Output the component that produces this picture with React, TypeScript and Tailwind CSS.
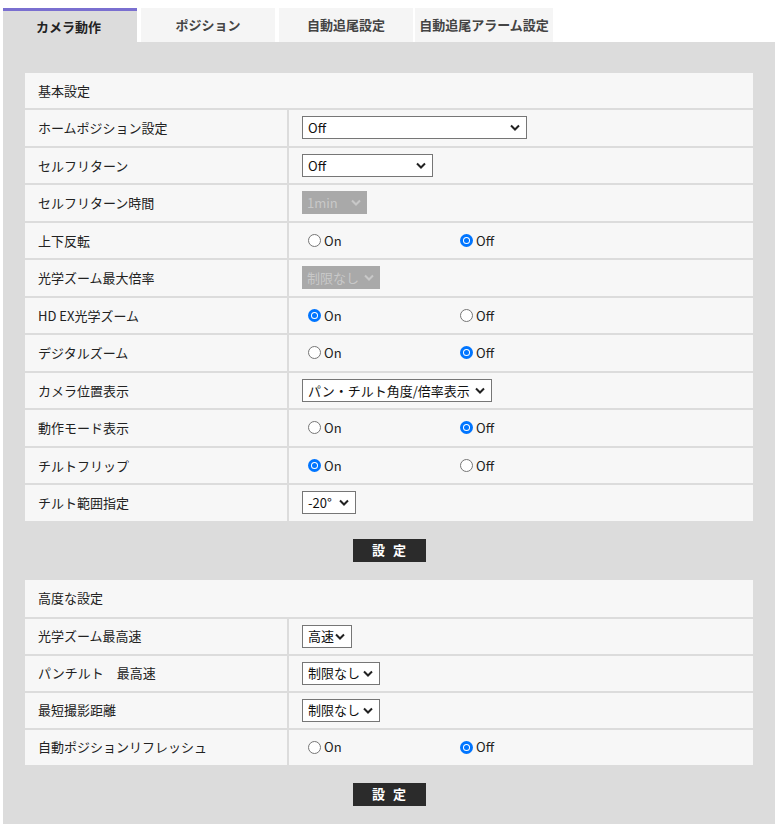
import React from "react";

const Chev = ({ c = "#222" }: { c?: string }) => (
  <svg width="10" height="7" viewBox="0 0 10 7"><path d="M1 1.5 L5 5.5 L9 1.5" stroke={c} strokeWidth="2" fill="none" /></svg>
);

const Sel = ({ text, w, disabled }: { text: string; w: number; disabled?: boolean }) => (
  <div
    style={{ width: w }}
    className={`h-[23px] flex items-center justify-between pl-[5px] pr-[6px] text-[13px] ${disabled ? "bg-[#a9a9a9] text-[#c8c8c8]" : "bg-white border border-[#767676] text-[#111]"}`}
  >
    <span>{text}</span>
    <Chev c={disabled ? "#c8c8c8" : "#222"} />
  </div>
);

const Radio = ({ on, label }: { on: boolean; label: string }) => (
  <span className="flex items-center gap-[3px] text-[13px]">
    {on ? (
      <span className="w-[13px] h-[13px] rounded-full bg-[#0075ff] flex items-center justify-center"><span className="w-[7px] h-[7px] rounded-full bg-white flex items-center justify-center"><span className="w-[5px] h-[5px] rounded-full bg-[#0075ff]" /></span></span>
    ) : (
      <span className="w-[13px] h-[13px] rounded-full border border-[#767676] bg-white" />
    )}
    <span>{label}</span>
  </span>
);

const OnOff = ({ on }: { on: boolean }) => (
  <div className="flex items-center">
    <div className="w-[158px] pl-[6px]"><Radio on={on} label="On" /></div>
    <Radio on={!on} label="Off" />
  </div>
);

const Row = ({ label, children, h = "h-[37.5px]" }: { label: string; children: React.ReactNode; h?: string }) => (
  <div className={`flex ${h} border-t-[2px] border-[#dcdcdc]`}>
    <div className="w-[264px] pl-[13px] flex items-center border-r-[2px] border-[#dcdcdc]">{label}</div>
    <div className="flex-1 pl-[13px] flex items-center">{children}</div>
  </div>
);

const Btn = () => (
  <div className="flex justify-center py-[18px]">
    <div className="w-[73px] h-[23px] bg-[#2b2b2b] text-white text-[13px] font-bold flex items-center justify-center tracking-[0.6em] pl-[0.6em]">設定</div>
  </div>
);

export default function App() {
  return (
    <div className="w-[779px] h-[824px] bg-white text-[13px] text-[#222]" style={{ fontFamily: '"Noto Sans CJK JP", "Noto Sans", sans-serif' }}>
      <div className="pt-[8px] pl-[3px] flex text-[13px] font-bold">
        <div className="w-[134px] h-[34px] bg-[#dcdcdc] border-t-[3px] border-[#7a6fd0] flex items-center pl-[33px]">カメラ動作</div>
        <div className="w-[134px] h-[34px] bg-[#f5f5f5] ml-[4px] flex items-center justify-center text-[#444]">ポジション</div>
        <div className="w-[134px] h-[34px] bg-[#f5f5f5] ml-[4px] flex items-center justify-center text-[#444]">自動追尾設定</div>
        <div className="w-[138px] h-[34px] bg-[#f5f5f5] ml-[2px] flex items-center justify-center text-[#444]">自動追尾アラーム設定</div>
      </div>
      <div className="ml-[3px] w-[772px] h-[782px] bg-[#dcdcdc] pt-[31px] px-[22px]">
        <div className="bg-[#f7f7f7]">
          <div className="h-[35px] flex items-center pl-[13px]">基本設定</div>
          <Row label="ホームポジション設定"><Sel text="Off" w={225} /></Row>
          <Row label="セルフリターン"><Sel text="Off" w={131} /></Row>
          <Row label="セルフリターン時間"><Sel text="1min" w={65} disabled /></Row>
          <Row label="上下反転"><OnOff on={false} /></Row>
          <Row label="光学ズーム最大倍率"><Sel text="制限なし" w={78} disabled /></Row>
          <Row label="HD EX光学ズーム"><OnOff on={true} /></Row>
          <Row label="デジタルズーム"><OnOff on={false} /></Row>
          <Row label="カメラ位置表示"><Sel text="パン・チルト角度/倍率表示" w={190} /></Row>
          <Row label="動作モード表示"><OnOff on={false} /></Row>
          <Row label="チルトフリップ"><OnOff on={true} /></Row>
          <Row label="チルト範囲指定"><Sel text="-20°" w={54} /></Row>
        </div>
        <Btn />
        <div className="bg-[#f7f7f7]">
          <div className="h-[37px] flex items-center pl-[13px]">高度な設定</div>
          <Row h="h-[37px]" label="光学ズーム最高速"><Sel text="高速" w={50} /></Row>
          <Row h="h-[37px]" label="パンチルト　最高速"><Sel text="制限なし" w={78} /></Row>
          <Row h="h-[37px]" label="最短撮影距離"><Sel text="制限なし" w={78} /></Row>
          <Row h="h-[37px]" label="自動ポジションリフレッシュ"><OnOff on={false} /></Row>
        </div>
        <Btn />
      </div>
    </div>
  );
}
